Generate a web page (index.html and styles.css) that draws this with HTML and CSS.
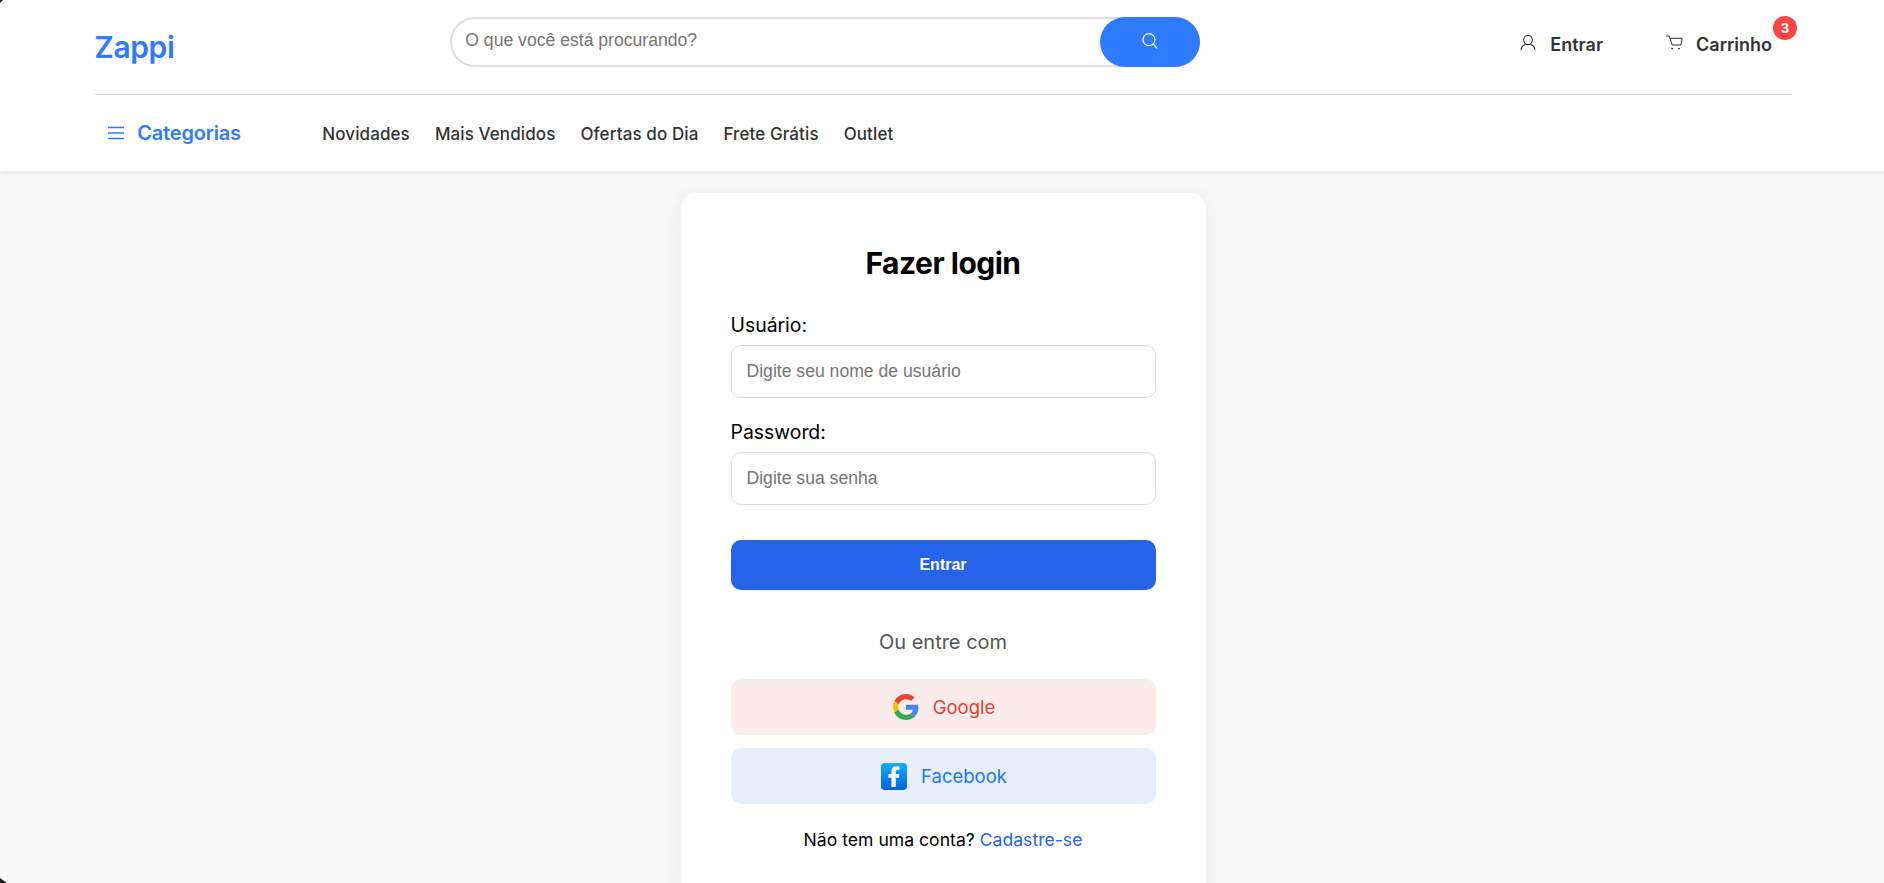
FILE: index.html
```html
<!DOCTYPE html>
<html lang="pt-BR">

<head>
    <meta charset="UTF-8">
    <meta name="viewport" content="width=device-width, initial-scale=1.0">
    <title>Zappi - Fazer login</title>
    <link rel="stylesheet" href="styles.css">
</head>

<body>

    <header class="site-header">
        <div class="header-inner">
            <div class="top-row">
                <a class="logo" href="#">Zappi</a>
                <form class="search">
                    <input class="search-input" type="text" placeholder="O que você está procurando?">
                    <button class="search-btn" type="button" aria-label="Buscar">
                        <svg width="18" height="18" viewBox="0 0 18 18" fill="none" stroke="#fff" stroke-width="1.3" stroke-linecap="round">
                            <circle cx="8" cy="7.6" r="6"/>
                            <path d="M12.2 12l3.600 4"/>
                        </svg>
                    </button>
                </form>
                <div class="actions">
                    <a class="action action-user" href="#">
                        <svg width="16" height="15" viewBox="0 0 16 15" fill="none" stroke="#333" stroke-width="1.1" stroke-linecap="round">
                            <ellipse cx="8" cy="5" rx="4.300" ry="4.600"/>
                            <path d="M1 14.500c.4-2.500 2-4.300 4-5.100M15 14.500c-.4-2.500-2-4.300-4-5.100"/>
                        </svg>
                        Entrar
                    </a>
                    <a class="action action-cart" href="#">
                        <svg width="17" height="15" viewBox="0 0 17 15" fill="none" stroke="#333" stroke-width="1" stroke-linecap="round" stroke-linejoin="round">
                            <path d="M.5 1h2.800l2.900 9h8.600l1.500-6.700H3.900"/>
                            <circle cx="6" cy="13.600" r=".5"/>
                            <circle cx="13" cy="13.600" r=".5"/>
                        </svg>
                        Carrinho
                        <span class="badge">3</span>
                    </a>
                </div>
            </div>
            <nav class="nav-row">
                <a class="categories" href="#">
                    <svg width="16" height="14" viewBox="0 0 16 14" fill="none" stroke="#2f7bff" stroke-width="1.3">
                        <path d="M0 1.500h16M0 7h16M0 12.500h16"/>
                    </svg>
                    Categorias
                </a>
                <div class="nav-links">
                    <a href="#">Novidades</a>
                    <a href="#">Mais Vendidos</a>
                    <a href="#">Ofertas do Dia</a>
                    <a href="#">Frete Grátis</a>
                    <a href="#">Outlet</a>
                </div>
            </nav>
        </div>
    </header>

    <main class="page">
        <section class="login-card">
            <h1 class="login-title">Fazer login</h1>
            <form>
                <label class="field-label" for="user">Usuário:</label>
                <input class="field-input" id="user" type="text" placeholder="Digite seu nome de usuário">
                <label class="field-label field-label-next" for="pass">Password:</label>
                <input class="field-input" id="pass" type="password" placeholder="Digite sua senha">
                <button class="submit-btn" type="button">Entrar</button>
            </form>
            <p class="divider-text">Ou entre com</p>
            <div class="social">
                <a class="social-btn social-google" href="#">
                    <svg width="26" height="26" viewBox="0 0 48 48">
                        <path fill="#EA4335" d="M24 9.500c3.500 0 6.700 1.300 9.200 3.600l6.800-6.800C35.800 2.400 30.300 0 24 0 14.600 0 6.500 5.400 2.600 13.200l8 6.200C12.400 13.700 17.700 9.500 24 9.500z"/>
                        <path fill="#4285F4" d="M46.900 24.500c0-1.600-.1-3.100-.4-4.500H24v9h12.900c-.6 3-2.200 5.500-4.700 7.200l7.700 6c4.500-4.200 7-10.300 7-17.700z"/>
                        <path fill="#FBBC05" d="M10.500 28.600c-.5-1.400-.8-3-.8-4.600s.3-3.200.8-4.600l-8-6.200C.9 16.500 0 20.100 0 24s.9 7.500 2.600 10.800l7.900-6.200z"/>
                        <path fill="#34A853" d="M24 48c6.500 0 11.900-2.100 15.900-5.800l-7.700-6c-2.200 1.500-4.900 2.300-8.200 2.300-6.300 0-11.600-4.200-13.500-9.900l-8 6.200C6.500 42.600 14.600 48 24 48z"/>
                    </svg>
                    Google
                </a>
                <a class="social-btn social-facebook" href="#">
                    <svg width="26" height="27" viewBox="0 0 26 27">
                        <defs>
                            <linearGradient id="fb-fill" x1="0" y1="0" x2="0" y2="1">
                                <stop offset="0" stop-color="#18acfe"/>
                                <stop offset="1" stop-color="#0163e0"/>
                            </linearGradient>
                        </defs>
                        <rect width="26" height="27" rx="4" fill="url(#fb-fill)"/>
                        <path fill="#fff" d="M17.800 14.800l.6-3.800h-3.700V8.700c0-1.100.5-2 2-2h1.800V3.500s-1.500-.3-3-.3c-3.200 0-5 1.900-5 5.100V11H7.300v3.800h3.200V24h4.200v-9.200z"/>
                    </svg>
                    Facebook
                </a>
            </div>
            <p class="signup">Não tem uma conta? <a href="#">Cadastre-se</a></p>
        </section>
    </main>

    <!-- the window's rounded corners show in the picture -->
    <div class="corner corner-top"></div>
    <div class="corner corner-bottom"></div>

</body>

</html>
```

FILE: styles.css
```css
* {
    margin: 0;
    padding: 0;
    box-sizing: border-box;
}

html,
body {
    height: 100%;
    overflow: hidden;
}

body {
    min-width: 1886px;
    background: #f9f9f9;
    font-family: "Inter", "Liberation Sans", sans-serif;
    color: #000;
}

a {
    text-decoration: none;
    color: inherit;
}

/* header */
.site-header {
    background: #fff;
    box-shadow: 0 2px 5px rgba(0, 0, 0, 0.06);
}

.header-inner {
    width: 90%;
    margin: 0 auto;
    padding-top: 17px;
}

.top-row {
    display: flex;
    align-items: center;
    height: 78px;
    padding-bottom: 28px;
    border-bottom: 1px solid #ddd;
}

.logo {
    width: 356px;
    flex: none;
    margin-top: 10px;
    font-size: 30px;
    font-weight: 600;
    letter-spacing: -0.4px;
    color: #2f7bff;
}

.search {
    display: flex;
    width: 750px;
    flex: none;
    height: 50px;
}

.search-input {
    flex: 1;
    min-width: 0;
    height: 50px;
    margin-right: -100px;
    padding: 0 110px 2px 13px;
    border: 2px solid #ddd;
    border-radius: 25px;
    font-family: "Liberation Sans", sans-serif;
    font-size: 17.6px;
    outline: none;
}

.search-btn {
    position: relative;
    width: 100px;
    height: 50px;
    border: 0;
    border-radius: 25px;
    background: #2f7bff;
    cursor: pointer;
}

.search-btn svg {
    display: block;
    margin: -2px auto 0;
}

.actions {
    display: flex;
    align-items: center;
    margin-left: 320px;
    margin-top: 5px;
    gap: 63px;
    font-size: 18px;
    font-weight: 600;
    color: #333;
}

.action {
    display: flex;
    align-items: center;
    position: relative;
    gap: 14px;
}

.action-cart {
    gap: 13px;
}

.action svg {
    margin-top: -4px;
}

.badge {
    position: absolute;
    right: -25px;
    top: -18px;
    width: 24px;
    height: 24px;
    border-radius: 50%;
    background: #f44;
    color: #fff;
    font-size: 13px;
    font-weight: 700;
    line-height: 24px;
    text-align: center;
}

.nav-row {
    display: flex;
    align-items: center;
    height: 76px;
}

.categories {
    display: flex;
    align-items: center;
    width: 228px;
    flex: none;
    padding-left: 14px;
    gap: 13px;
    font-size: 20px;
    font-weight: 600;
    letter-spacing: -0.2px;
    color: #2f7bff;
}

.nav-links {
    display: flex;
    gap: 25px;
    padding-top: 2px;
    font-size: 17px;
    font-weight: 500;
    letter-spacing: 0.1px;
    color: #333;
}

/* login card */
.page {
    display: flex;
    justify-content: center;
    padding-top: 22px;
}

.login-card {
    width: 525px;
    padding: 50px;
    border-radius: 15px;
    background: #fff;
    box-shadow: 0 4px 24px rgba(0, 0, 0, 0.08);
}

.login-title {
    font-size: 30px;
    font-weight: 700;
    line-height: 40px;
    letter-spacing: -0.5px;
    text-align: center;
    margin-bottom: 31px;
}

.field-label {
    display: block;
    margin-bottom: 8px;
    font-size: 19.4px;
    font-weight: 400;
    line-height: 23px;
}

.field-label-next {
    margin-top: 23px;
}

.field-input {
    display: block;
    width: 100%;
    height: 53px;
    padding: 0 15px;
    border: 1px solid #ddd;
    border-radius: 10px;
    font-family: "Liberation Sans", sans-serif;
    font-size: 17.6px;
    outline: none;
}

.submit-btn {
    display: block;
    width: 100%;
    height: 50px;
    margin-top: 35px;
    border: 0;
    border-radius: 10px;
    background: #2563eb;
    color: #fff;
    font-family: "Liberation Sans", sans-serif;
    font-size: 16px;
    font-weight: 700;
    cursor: pointer;
}

.divider-text {
    margin-top: 40px;
    font-size: 20px;
    line-height: 24px;
    color: #555;
    text-align: center;
}

.social {
    display: flex;
    flex-direction: column;
    gap: 13px;
    margin-top: 25px;
}

.social-btn {
    display: flex;
    align-items: center;
    justify-content: center;
    height: 56px;
    gap: 14px;
    padding-left: 2px;
    border-radius: 10px;
    font-size: 18.5px;
}

.social-google {
    background: #fcebeb;
    color: #db4437;
}

.social-facebook {
    background: #e7effc;
    color: #1877f2;
}

.signup {
    margin-top: 24px;
    font-size: 17.6px;
    line-height: 24px;
    text-align: center;
}

.signup a {
    color: #2563eb;
}

/* window corners */
.corner {
    position: fixed;
    left: 0;
    background: #222;
}

.corner-top {
    top: 0;
    width: 3px;
    height: 3px;
    clip-path: polygon(0 0, 100% 0, 0 100%);
}

.corner-bottom {
    bottom: 0;
    width: 7px;
    height: 5px;
    clip-path: polygon(0 0, 100% 100%, 0 100%);
}
```
